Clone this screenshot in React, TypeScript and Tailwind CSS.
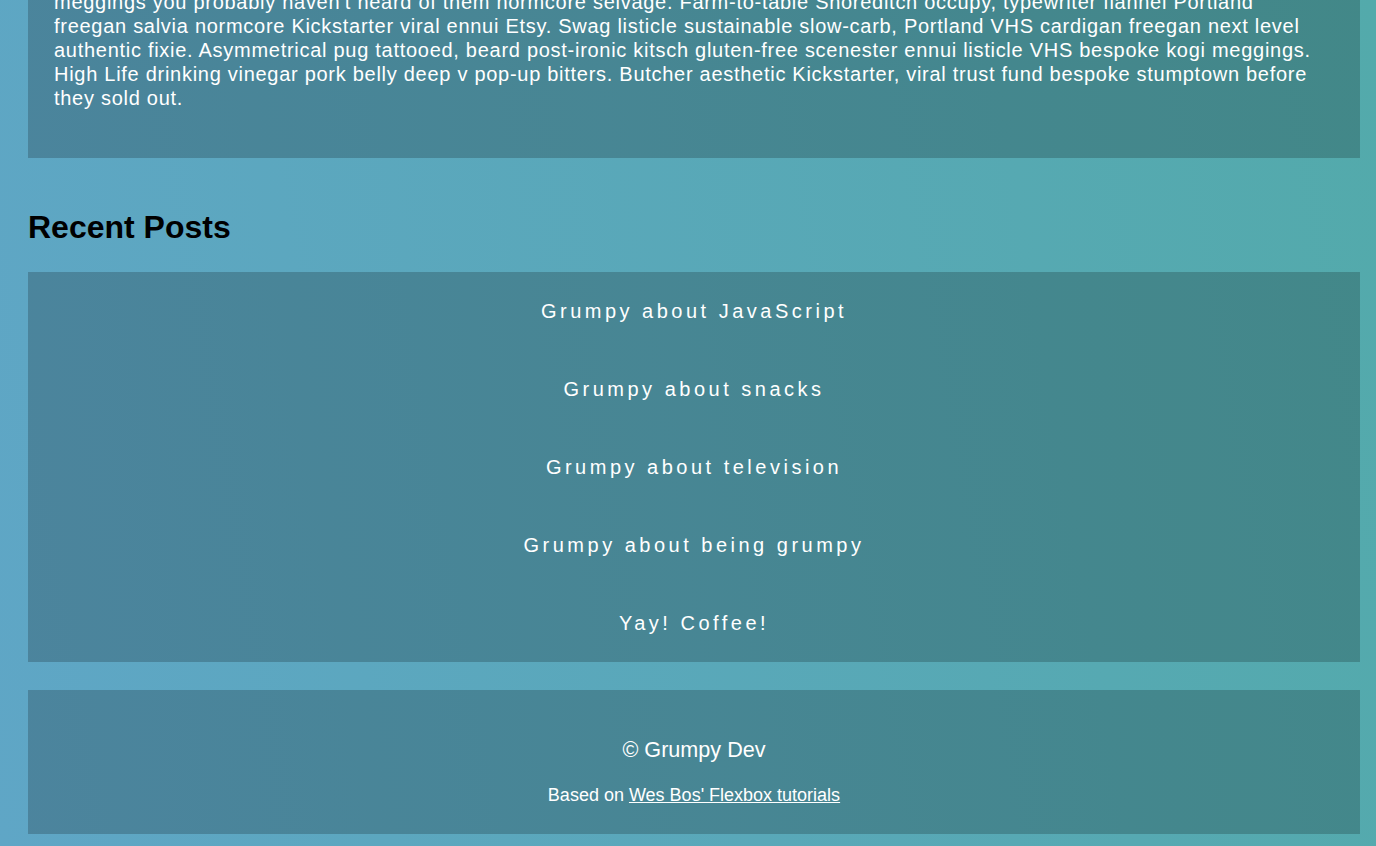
const intro = [
  "meggings you probably haven't heard of them normcore selvage. Farm-to-table Shoreditch occupy, typewriter flannel Portland",
  'freegan salvia normcore Kickstarter viral ennui Etsy. Swag listicle sustainable slow-carb, Portland VHS cardigan freegan next level',
  'authentic fixie. Asymmetrical pug tattooed, beard post-ironic kitsch gluten-free scenester ennui listicle VHS bespoke kogi meggings.',
  'High Life drinking vinegar pork belly deep v pop-up bitters. Butcher aesthetic Kickstarter, viral trust fund bespoke stumptown before',
  'they sold out.',
];

const posts = [
  'Grumpy about JavaScript',
  'Grumpy about snacks',
  'Grumpy about television',
  'Grumpy about being grumpy',
  'Yay! Coffee!',
];

export default function App() {
  return (
    <div
      className="h-screen overflow-hidden bg-[linear-gradient(80deg,#5fa6c6,#53aaab)] text-white antialiased"
      style={{ fontFamily: '"Liberation Sans", Arial, Helvetica, sans-serif' }}
    >
      <div className="ml-[28px] mr-[16px]">
        {/* About panel (page is scrolled, top is cut off) */}
        <section className="-mt-[10px] bg-black/20 px-[26px] pb-[48px]">
          <p className="text-[20px] leading-[24px] tracking-[0.72px] whitespace-nowrap">
            {intro.map((line, i) => (
              <span key={i} className="block">{line}</span>
            ))}
          </p>
        </section>

        <h2 className="mt-[53px] text-[32px] leading-none font-bold text-black">Recent Posts</h2>

        <ul className="mt-[29px] bg-black/20">
          {posts.map((post) => (
            <li
              key={post}
              className="flex h-[78px] items-center justify-center text-[20px] tracking-[3.5px]"
            >
              <a href="#">{post}</a>
            </li>
          ))}
        </ul>

        {/* Footer */}
        <footer className="mt-[28px] flex flex-col items-center bg-black/20 pt-[48px] pb-[29px]">
          <p className="text-[21.6px] leading-[24px]">© Grumpy Dev</p>
          <p className="mt-[23px] text-[18px] leading-[20px]">
            Based on{' '}
            <a href="#" className="underline">Wes Bos' Flexbox tutorials</a>
          </p>
        </footer>
      </div>
    </div>
  );
}
